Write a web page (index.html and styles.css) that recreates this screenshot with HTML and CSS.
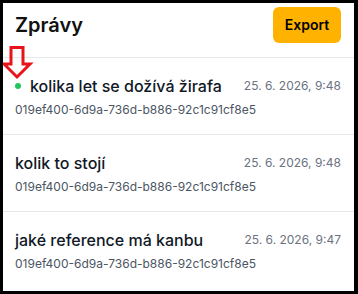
FILE: index.html
```html
<!DOCTYPE html>
<html lang="cs">
<head>
<meta charset="utf-8">
<title>Zprávy</title>
<link rel="stylesheet" href="styles.css">
</head>
<body>
<div class="panel">
  <header class="header">
    <h1 class="title">Zprávy</h1>
    <button class="export">Export</button>
  </header>
  <ul class="list">
    <li class="item">
      <div class="item-top">
        <div class="item-name"><span class="dot"></span><span class="name">kolika let se dožívá žirafa</span></div>
        <span class="date">25. 6. 2026, 9:48</span>
      </div>
      <div class="item-id">019ef400-6d9a-736d-b886-92c1c91cf8e5</div>
    </li>
    <li class="item">
      <div class="item-top">
        <div class="item-name"><span class="name">kolik to stojí</span></div>
        <span class="date">25. 6. 2026, 9:48</span>
      </div>
      <div class="item-id">019ef400-6d9a-736d-b886-92c1c91cf8e5</div>
    </li>
    <li class="item">
      <div class="item-top">
        <div class="item-name"><span class="name">jaké reference má kanbu</span></div>
        <span class="date">25. 6. 2026, 9:47</span>
      </div>
      <div class="item-id">019ef400-6d9a-736d-b886-92c1c91cf8e5</div>
    </li>
  </ul>
  <svg class="arrow" width="36" height="40" viewBox="0 0 36 40" aria-hidden="true">
    <polygon points="11,7.5 23,7.5 23,24 30,24 17,37 4,24 11,24" fill="none" stroke="#e8141b" stroke-width="3" stroke-linejoin="miter"/>
  </svg>
</div>
</body>
</html>
```
FILE: styles.css
```css
html, body {
  margin: 0;
  padding: 0;
  background: #000;
}
body {
  padding: 3px 4px 3px 3px;
  box-sizing: border-box;
  height: 294px;
}
.panel {
  position: relative;
  background: #fff;
  height: 288px;
  overflow: hidden;
  font-family: Inter, "Noto Sans", sans-serif;
}
.header {
  display: flex;
  justify-content: space-between;
  align-items: center;
  height: 55px;
  box-sizing: border-box;
  padding: 4px 13px 15px 12px;
  border-bottom: 1px solid #e5e7eb;
}
.title {
  margin: 0;
  font-family: Inter, sans-serif;
  font-weight: 600;
  font-size: 20px;
  line-height: 28px;
  color: #111;
}
.export {
  width: 68px;
  height: 36px;
  border: 0;
  border-radius: 6px;
  background: #ffb300;
  color: #000;
  font-family: Inter, sans-serif;
  font-weight: 600;
  font-size: 14px;
  padding: 0;
}
.list {
  list-style: none;
  margin: 0;
  padding: 0;
}
.item {
  padding: 16px 13px 16px 12px;
  border-bottom: 1px solid #e5e7eb;
}
.item:last-child {
  border-bottom: 0;
}
.item-top {
  display: flex;
  justify-content: space-between;
  align-items: center;
}
.item-name {
  display: flex;
  align-items: center;
}
.dot {
  width: 6px;
  height: 6px;
  border-radius: 50%;
  background: #22c55e;
  margin-right: 9px;
}
.name {
  font-size: 16px;
  font-weight: 500;
  line-height: 24px;
  color: #111827;
}
.date {
  font-size: 12px;
  line-height: 20px;
  color: #6b7280;
}
.item-id {
  margin-top: 4px;
  font-size: 12px;
  line-height: 16px;
  color: #4b5563;
}
.arrow {
  position: absolute;
  left: -3px;
  top: 37px;
}
```
